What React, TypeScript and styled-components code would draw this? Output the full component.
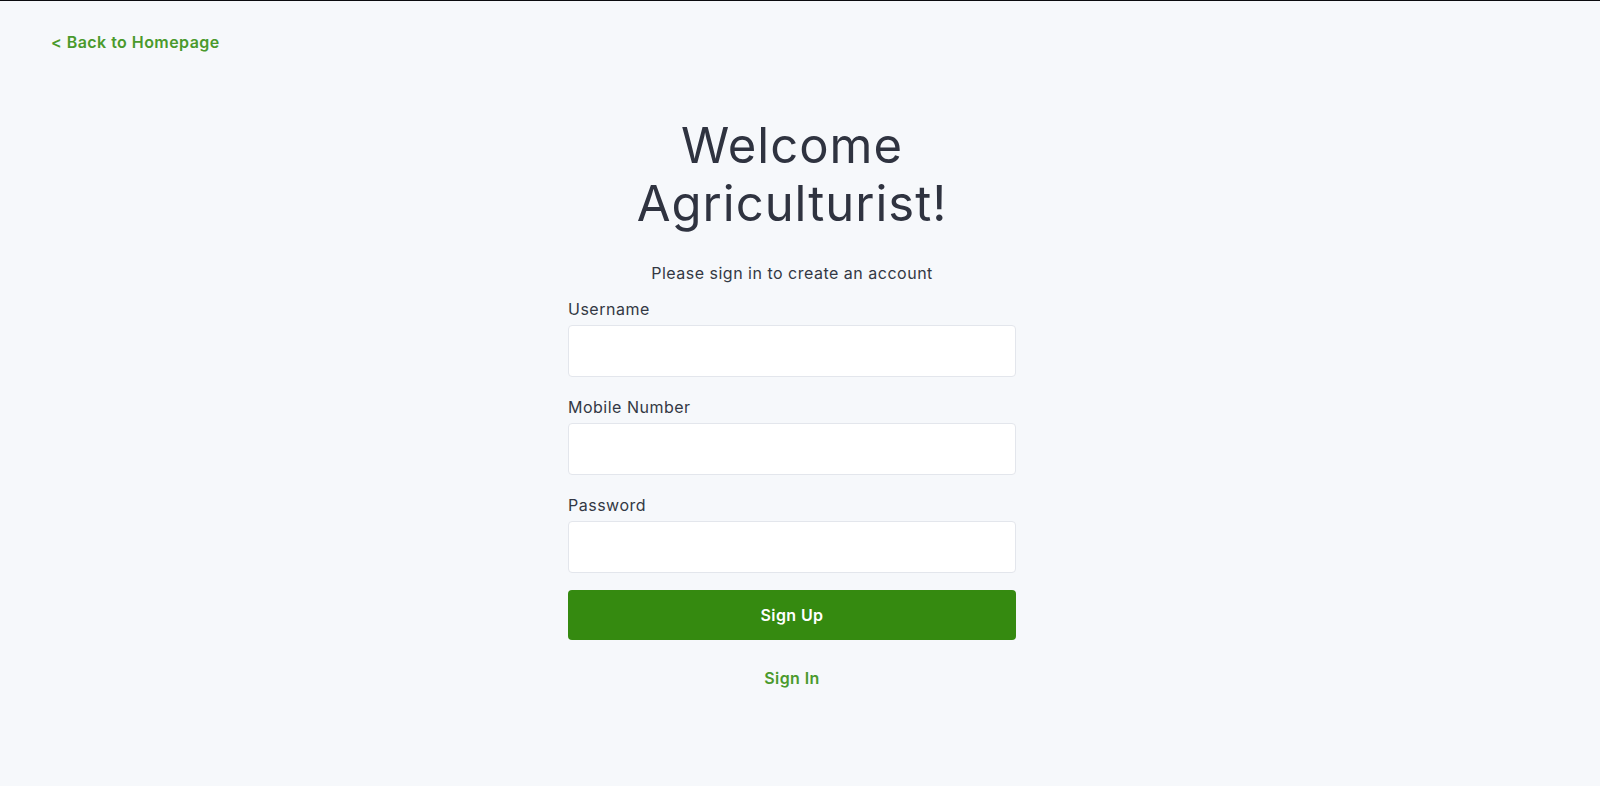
import { FC } from "react";
import styled, { createGlobalStyle } from "styled-components";

const GlobalStyle = createGlobalStyle`
  html, body {
    margin: 0;
    padding: 0;
    background: #f6f8fb;
  }
  body {
    font-family: Inter, "Open Sans", sans-serif;
    color: #333844;
  }
  * {
    box-sizing: border-box;
  }
`;

const fields = ["Username", "Mobile Number", "Password"];

const App: FC = () => {
  return (
    <Page>
      <GlobalStyle />
      <BackLink href="#">&lt; Back to Homepage</BackLink>
      <Main>
        <Title>
          Welcome
          <br />
          Agriculturist!
        </Title>
        <Subtitle>Please sign in to create an account</Subtitle>
        <Form onSubmit={e => e.preventDefault()}>
          {fields.map(f => (
            <Field key={f}>
              <Label>{f}</Label>
              <Input type={f === "Password" ? "password" : "text"} />
            </Field>
          ))}
          <Submit type="submit">Sign Up</Submit>
        </Form>
        <SignIn href="#">Sign In</SignIn>
      </Main>
    </Page>
  );
};

const Page = styled.div`
  min-height: 786px;
  border-top: 1px solid #0b0b0f;
  padding: 30px 67px 0 51px;
`;

const BackLink = styled.a`
  display: inline-block;
  font-size: 16px;
  line-height: 22px;
  font-weight: 600;
  letter-spacing: 0.45px;
  color: #4a9a2c;
  text-decoration: none;
`;

const Main = styled.div`
  width: 448px;
  margin: 0 auto;
  margin-top: 64px;
  display: flex;
  flex-direction: column;
  align-items: center;
`;

const Title = styled.h1`
  margin: 0;
  font-size: 49px;
  line-height: 58px;
  font-weight: 400;
  letter-spacing: 1px;
  text-align: center;
  color: #2f3340;
`;

const Subtitle = styled.p`
  margin: 28px 0 12px;
  font-size: 16px;
  line-height: 24px;
  letter-spacing: 0.5px;
  color: #333844;
`;

const Form = styled.form`
  width: 100%;
  display: flex;
  flex-direction: column;
`;

const Field = styled.div`
  display: flex;
  flex-direction: column;
  margin-bottom: 18px;
  &:nth-last-of-type(1) {
    margin-bottom: 17px;
  }
`;

const Label = styled.label`
  font-size: 16px;
  line-height: 24px;
  letter-spacing: 0.5px;
  margin-bottom: 4px;
  color: #333844;
`;

const Input = styled.input`
  height: 52px;
  width: 100%;
  border: 1px solid #e3e6ec;
  border-radius: 4px;
  background: #ffffff;
  padding: 0 14px;
  font-size: 15px;
  outline: none;
`;

const Submit = styled.button`
  height: 50px;
  width: 100%;
  border: none;
  border-radius: 4px;
  background: #358a10;
  color: #ffffff;
  font-family: inherit;
  font-size: 16px;
  font-weight: 600;
  letter-spacing: 0.4px;
  cursor: pointer;
`;

const SignIn = styled.a`
  margin-top: 26px;
  font-size: 16px;
  line-height: 24px;
  font-weight: 600;
  letter-spacing: 0.4px;
  color: #4a9a2c;
  text-decoration: none;
`;

export default App;
